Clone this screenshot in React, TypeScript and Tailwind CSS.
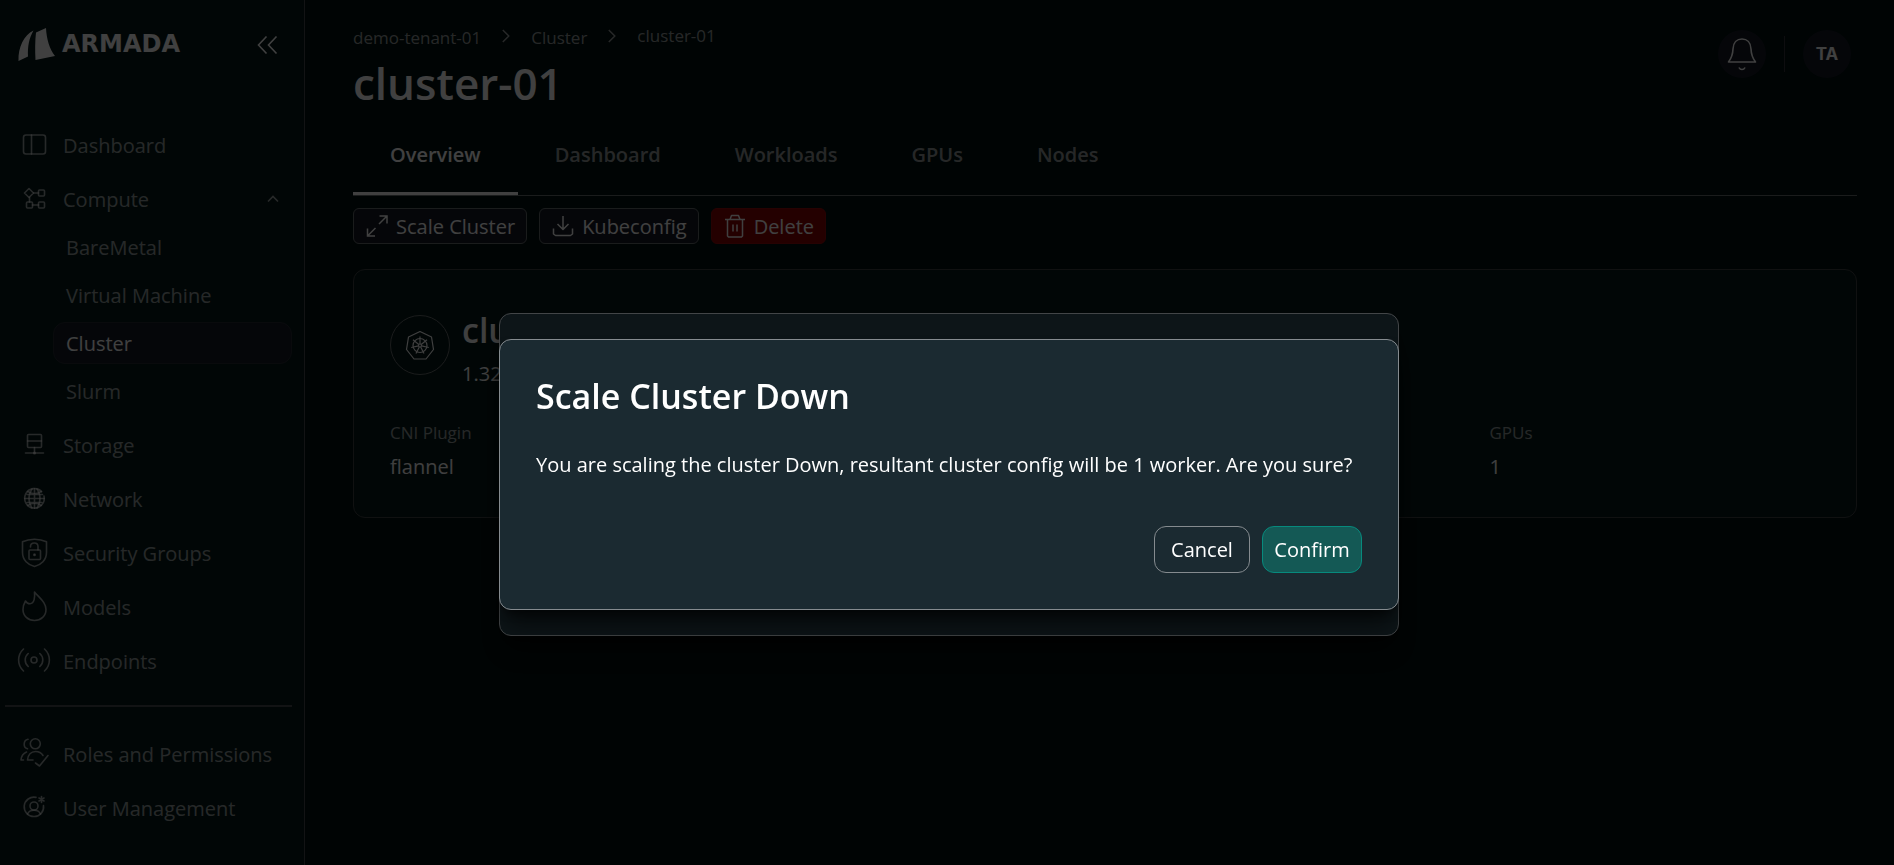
import React from 'react';
import clsx from 'clsx';

interface NavItem {
  label: string;
  icon: React.ReactNode;
  children?: { label: string; active?: boolean }[];
}

const Glyph: React.FC<{ children: React.ReactNode }> = ({ children }) => (
  <svg
    viewBox="0 0 36 36"
    className="size-9 shrink-0"
    fill="none"
    stroke="currentColor"
    strokeWidth="1.6"
    strokeLinecap="round"
    strokeLinejoin="round"
    aria-hidden="true"
  >
    {children}
  </svg>
);

const MAIN_NAV: NavItem[] = [
  {
    label: 'Dashboard',
    icon: (
      <Glyph>
        <rect x="7.5" y="8" width="22" height="19" rx="2.5" />
        <path d="M15.5 8v19" />
      </Glyph>
    ),
  },
  {
    label: 'Compute',
    icon: (
      <Glyph>
        <path d="M13 7.5l4.5 4.5-4.5 4.5L8.5 12z" />
        <rect x="22.5" y="9" width="6" height="6" rx="1" />
        <rect x="10.5" y="21" width="6" height="6" rx="1" />
        <rect x="22.5" y="21" width="6" height="6" rx="1" />
        <path d="M17.5 12h5M13.5 16.5V21M16.5 24h6" />
      </Glyph>
    ),
    children: [
      { label: 'BareMetal' },
      { label: 'Virtual Machine' },
      { label: 'Cluster', active: true },
      { label: 'Slurm' },
    ],
  },
  {
    label: 'Storage',
    icon: (
      <Glyph>
        <rect x="11.5" y="7.5" width="14" height="13" rx="1" />
        <path d="M11.5 14h14M18.5 20.5V26M9.5 26h18" />
        <circle cx="18.5" cy="26" r="0.8" fill="currentColor" />
      </Glyph>
    ),
  },
  {
    label: 'Network',
    icon: (
      <Glyph>
        <path d="M25.6 10.6A9.8 9.8 0 1 0 28 15" />
        <path d="M8.8 17.5h19.4M18.5 7.7v19.6M11 13.5h15.5M11 21.5h15" />
        <path d="M16 8c-4 5.5-4 13.5 0 19M21 8c4 5.5 4 13.5 0 19" />
        <path d="M11.8 10.5c4 3 9.5 3 13.5 0M11.8 24.5c4-3 9.5-3 13.5 0" />
      </Glyph>
    ),
  },
  {
    label: 'Security Groups',
    icon: (
      <Glyph>
        <path d="M6.5 6.8C13.5 3.3 23.5 3.3 30.5 6.8V17.5C30.5 25 25 30 18.5 31.5C12 30 6.5 25 6.5 17.5Z" />
        <rect x="13" y="15" width="11.5" height="9.5" rx="1" />
        <path d="M14.5 12V11.500c0-4.700 7.500-4.700 7.500 0V15" />
        <circle cx="18.5" cy="19.8" r="0.7" fill="currentColor" />
      </Glyph>
    ),
  },
  {
    label: 'Models',
    icon: (
      <Glyph>
        <path d="M18.5 3C19 8 18.5 14.5 14 14.7C12 14.7 10.3 13.5 9.5 12C8 14.5 7 17.5 7 20.5C7 27 12 31.5 18.5 31.5S30 27 30 20.5C30 13.5 24 9.5 18.5 3Z" />
      </Glyph>
    ),
  },
  {
    label: 'Endpoints',
    icon: (
      <Glyph>
        <circle cx="18" cy="17" r="3" />
        <path d="M12.2 10.5c-4 3.5-4 9.5 0 13M23.8 10.5c4 3.5 4 9.5 0 13" />
        <path d="M7.5 6c-6.5 6-6.5 16 0 22M28.5 6c6.5 6 6.5 16 0 22" />
      </Glyph>
    ),
  },
];

const ADMIN_NAV: NavItem[] = [
  {
    label: 'Roles and Permissions',
    icon: (
      <Glyph>
        <circle cx="19.3" cy="7.8" r="5" />
        <path d="M12 3.3c-5 1-5 8.5-.5 9.5" />
        <path d="M17 24h-5.5c.5-5 3.5-8.5 8-8.5 3.5 0 6 1.5 7.5 4" />
        <path d="M7.5 24H5c.3-3.5 2-6.5 5.5-8" />
        <path d="M19.5 27l4 3L32 19.5" />
      </Glyph>
    ),
  },
  {
    label: 'User Management',
    icon: (
      <Glyph>
        <path d="M20 7.4A9.7 9.7 0 1 0 27.5 15.5" />
        <circle cx="18" cy="16" r="4" />
        <path d="M11.5 24c2-5 11-5 13 0" />
        <path d="M25.5 6.5v6M23 8l5 3M28 8l-5 3" />
      </Glyph>
    ),
  },
];

const TABS = ['Overview', 'Dashboard', 'Workloads', 'GPUs', 'Nodes'];

const NavLink: React.FC<{ item: NavItem }> = ({ item }) => (
  <li>
    <a href="#" className="flex h-[54px] items-center gap-[11px] pr-[25px] pl-4 text-white/60">
      {item.icon}
      <span className="flex-1 pt-0.5 whitespace-nowrap">{item.label}</span>
      {item.children && (
        <svg viewBox="0 0 12 8" className="w-3" fill="none" stroke="currentColor" strokeWidth="1.6" aria-hidden="true">
          <path d="M1 6.5l5-5 5 5" />
        </svg>
      )}
    </a>
    {item.children && (
      <ul className="flex flex-col gap-1.5 pr-3 pb-1.5 pl-[53px]">
        {item.children.map(child => (
          <li key={child.label}>
            <a
              href="#"
              className={clsx(
                'flex h-[42px] items-center rounded-xl border px-3 pt-0.5',
                child.active ? 'border-[#262a32] bg-[#151a26] text-white' : 'border-transparent text-white/60'
              )}
            >
              {child.label}
            </a>
          </li>
        ))}
      </ul>
    )}
  </li>
);

const Sidebar: React.FC = () => (
  <aside className="min-h-screen w-[305px] shrink-0 border-r border-[#4a4c50] bg-[#051a1a]">
    <div className="flex h-[118px] items-start justify-between pt-[27px] pr-[26px] pl-[18px] text-white">
      <div className="flex items-start gap-[6px]">
        <svg viewBox="0 0 38 35" className="w-[38px]" fill="currentColor" aria-hidden="true">
          <path d="M15.5 3.5C6 8 0 20 .5 34L10 29.5C9.5 20 11 11 15.5 3.5Z" />
          <path d="M18 5.5L28 1C28.5 12 31.5 22 37 29L17.5 33C17 24 17 14 18 5.5Z" />
        </svg>
        <span className="pt-[5px] font-['DejaVu_Sans',sans-serif] text-[24px] leading-6 font-bold">ARMADA</span>
      </div>
      <button type="button" aria-label="Collapse sidebar" className="pt-2">
        <svg viewBox="0 0 21 20" className="w-[21px]" fill="none" stroke="currentColor" strokeWidth="1.6" aria-hidden="true">
          <path d="M9.5 1.5L1.5 10l8 8.5M19.5 1.5l-8 8.5 8 8.5" />
        </svg>
      </button>
    </div>
    <nav>
      <ul>
        {MAIN_NAV.map(item => <NavLink key={item.label} item={item} />)}
      </ul>
      <hr className="mt-[17px] mr-3 mb-5 ml-[5px] border-t-2 border-[#4a4c50]" />
      <ul>
        {ADMIN_NAV.map(item => <NavLink key={item.label} item={item} />)}
      </ul>
    </nav>
  </aside>
);

const Crumb: React.FC = () => (
  <svg viewBox="0 0 8 14" className="mx-[21px] w-2" fill="none" stroke="currentColor" strokeWidth="1.5" aria-hidden="true">
    <path d="M.8 1l6 6-6 6" />
  </svg>
);

const PageHeader: React.FC = () => (
  <header className="flex justify-between pr-[6px]">
    <div>
      <nav aria-label="Breadcrumb" className="flex h-7 items-center text-[17px] leading-6 text-white/60">
        <a href="#" className="pt-1">demo-tenant-01</a>
        <Crumb />
        <a href="#" className="pt-1">Cluster</a>
        <Crumb />
        <span>cluster-01</span>
      </nav>
      <h1 className="pt-1.5 text-[44px] leading-[55px] font-semibold text-white">cluster-01</h1>
    </div>
    <div className="flex h-16 items-center gap-[18px]">
      <button type="button" aria-label="Notifications" className="flex size-12 items-center justify-center rounded-full bg-[#151a26] text-white">
        <svg viewBox="0 0 30 34" className="w-[30px]" fill="none" stroke="currentColor" strokeWidth="1.6" strokeLinejoin="round" strokeLinecap="round" aria-hidden="true">
          <path d="M1.5 25C4.5 21 5.8 18 6 12C6.2 5.5 10 2 15 2S23.8 5.5 24 12C24.2 18 25.5 21 28.5 25Z" />
          <path d="M12.3 31c1 2 4.400 2 5.400 0" />
        </svg>
      </button>
      <div className="h-9 w-px bg-[#34363c]" />
      <button type="button" className="flex size-12 items-center justify-center rounded-full bg-[#151a26] font-['Inter',sans-serif] text-[17px] font-bold text-white">
        TA
      </button>
    </div>
  </header>
);

const Tabs: React.FC = () => (
  <div role="tablist" className="flex h-[85px] border-b border-[#6a7072]">
    {TABS.map((tab, idx) => (
      <button
        key={tab}
        type="button"
        role="tab"
        aria-selected={idx === 0}
        className={clsx(
          'border-b-[3px] px-[37px] pt-1.5 font-semibold',
          idx === 0 ? 'border-white text-white' : 'border-transparent text-white/60'
        )}
      >
        {tab}
      </button>
    ))}
  </div>
);

const Toolbar: React.FC = () => (
  <div className="mt-3 flex gap-3 text-white">
    <button type="button" className="flex h-9 items-center gap-[7px] rounded-md border border-[#6a7072] bg-[#151a26] px-[11px]">
      <svg viewBox="0 0 24 24" className="size-6" fill="none" stroke="currentColor" strokeWidth="1.5" aria-hidden="true">
        <path d="M14.5 2H22v7.500M22 2l-8 8M2.5 14.5V22H10M2.5 22l8-8" />
      </svg>
      <span className="pt-0.5">Scale Cluster</span>
    </button>
    <button type="button" className="flex h-9 items-center gap-[7px] rounded-md border border-[#6a7072] bg-[#151a26] px-[11px]">
      <svg viewBox="0 0 24 24" className="size-6" fill="none" stroke="currentColor" strokeWidth="1.5" strokeLinejoin="round" aria-hidden="true">
        <path d="M12 2v13.5M6.5 10l5.5 5.5 5.5-5.5M2.5 14.5V20l2 1.5h15l2-1.5v-5.5" />
      </svg>
      <span className="pt-0.5">Kubeconfig</span>
    </button>
    <button type="button" className="flex h-9 items-center gap-[7px] rounded-md border border-[#980a0a] bg-[#900000] px-[11px]">
      <svg viewBox="0 0 24 24" className="size-6" fill="none" stroke="currentColor" strokeWidth="1.5" strokeLinejoin="round" aria-hidden="true">
        <path d="M2 5.5h20M7 5.5L8.5 1.5h7L17 5.5M4.5 5.5V22l1 1h13l1-1V5.5M10 10.5v7M14 10.5v7" />
      </svg>
      <span className="pt-0.5">Delete</span>
    </button>
  </div>
);

const KubernetesIcon: React.FC = () => (
  <svg viewBox="0 0 30 30" className="size-[30px]" fill="none" stroke="currentColor" strokeWidth="1.2" strokeLinejoin="round" aria-hidden="true">
    <path d="M15 1.5L26.5 7 28.5 19.5 21 29H9L1.5 19.5 3.5 7Z" />
    <circle cx="15" cy="15.5" r="7" />
    <circle cx="15" cy="15.5" r="1.5" />
    <path d="M15 6.5v7.5M22 9.8l-5.8 4.7M23.8 17.5l-7.3-1.7M19 23.6l-3.3-6.700M11 23.6l3.3-6.700M6.2 17.5l7.3-1.7M8 9.8l5.8 4.7" />
  </svg>
);

const STATS = [
  { label: 'CNI Plugin', value: 'flannel' },
  null,
  null,
  { label: 'GPUs', value: '1' },
];

const ClusterCard: React.FC = () => (
  <section className="mt-[25px] rounded-xl border border-[#404446] bg-[#051a1a] px-9 pt-[45px] pb-9 text-white">
    <div className="flex items-start gap-3">
      <div className="flex size-[60px] items-center justify-center rounded-full border border-[#6a6e70]">
        <KubernetesIcon />
      </div>
      <div>
        <h2 className="text-[34px] leading-[30px] font-semibold">cluster-01</h2>
        <p className="mt-[14px] leading-[30px]">1.32</p>
      </div>
    </div>
    <dl className="mt-8 grid grid-cols-4 gap-9">
      {STATS.map((stat, idx) => (
        <div key={idx}>
          {stat && (
            <>
              <dt className="text-[17px] leading-6 text-white/60">{stat.label}</dt>
              <dd className="mt-2 leading-7">{stat.value}</dd>
            </>
          )}
        </div>
      ))}
    </dl>
  </section>
);

const ConfirmDialog: React.FC = () => (
  <div className="fixed inset-0 flex items-center justify-center bg-black/50 pt-[84px] pl-1">
    <div
      role="alertdialog"
      aria-labelledby="confirm-title"
      aria-describedby="confirm-text"
      className="w-[900px] max-w-full rounded-xl border border-[#858b8f] bg-[#1b2a31] p-9 text-white shadow-xl shadow-black/60"
    >
      <h2 id="confirm-title" className="text-[34px] leading-10 font-semibold">Scale Cluster Down</h2>
      <p id="confirm-text" className="mt-[34px] leading-[30px]">
        You are scaling the cluster Down, resultant cluster config will be 1 worker. Are you sure?
      </p>
      <div className="mt-[46px] flex justify-end gap-3">
        <button type="button" className="h-[47px] w-24 rounded-xl border border-[#858b8f]">Cancel</button>
        <button type="button" className="h-[47px] w-[100px] rounded-xl border border-[#078a7d] bg-[#145955]">Confirm</button>
      </div>
    </div>
  </div>
);

export default function App() {
  return (
    <div className="flex min-h-screen bg-[#001010] font-['Open_Sans','Noto_Sans',sans-serif] text-[20px] leading-7">
      <Sidebar />
      <main className="min-w-0 flex-1 pt-[22px] pr-[37px] pl-12">
        <PageHeader />
        <Tabs />
        <Toolbar />
        <ClusterCard />
      </main>

      {/* Scale dialog stays mounted behind the confirmation */}
      <div className="fixed inset-0 flex items-center justify-center bg-black/50 pt-[84px] pl-1">
        <div className="h-[323px] w-[900px] max-w-full rounded-xl border border-[#858b8f] bg-[#1b2a31] shadow-xl shadow-black/60" />
      </div>
      <ConfirmDialog />
    </div>
  );
}
